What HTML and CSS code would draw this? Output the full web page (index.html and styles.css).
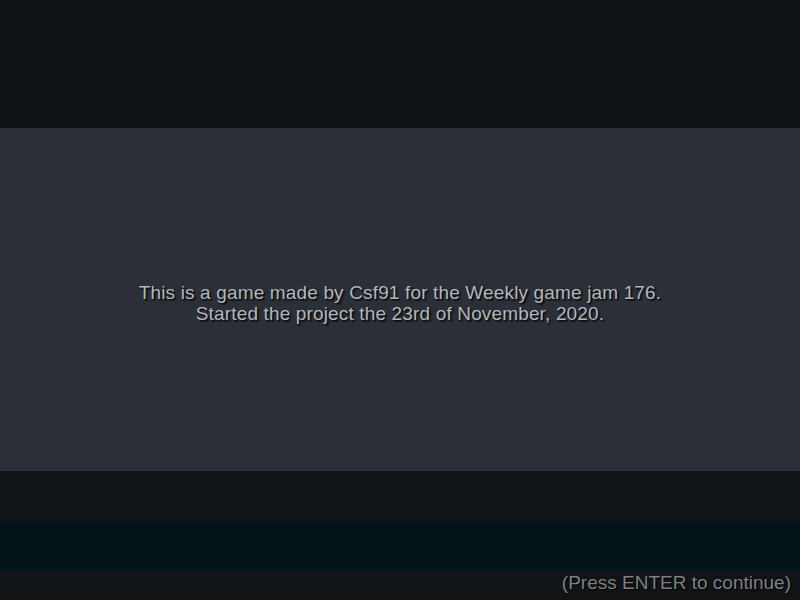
FILE: index.html
```html
<!DOCTYPE html>
<html>
<head>
<meta charset="utf-8">
<link rel="stylesheet" href="styles.css">
</head>
<body>
<div class="screen">
  <div class="band top"></div>
  <div class="band main">
    <p class="msg">This is a game made by Csf91 for the Weekly game jam 176.<br>Started the project the 23rd of November, 2020.</p>
  </div>
  <div class="band gap"></div>
  <div class="band teal"></div>
  <div class="band footer">
    <span class="hint">(Press ENTER to continue)</span>
  </div>
</div>
</body>
</html>
```
FILE: styles.css
```css
html, body { margin: 0; padding: 0; }
body { background: #101315; font-family: "Liberation Sans", Arial, sans-serif; }
.screen { width: 800px; height: 600px; display: flex; flex-direction: column; overflow: hidden; }
.band { flex: none; }
.top { height: 128px; background: #0e1316; }
.main { height: 343px; background: #2b3038; display: flex; align-items: center; justify-content: center; }
.msg { margin: 0; color: #b3b6ba; font-size: 19px; line-height: 21px; letter-spacing: 0.15px; text-align: center; text-shadow: 1px 1px 1px #0b0d10, 2px 2px 1px rgba(10,12,15,0.6); padding-top: 6px; }
.gap { height: 50px; background: #111416; }
.teal { height: 49px; background: #02161a; }
.footer { height: 30px; background: #111416; display: flex; justify-content: flex-end; align-items: flex-start; padding-right: 9px; }
.hint { color: #7d8083; font-size: 19px; line-height: 22px; margin-top: 2px; text-shadow: 1px 1px 1px #000; }
```
